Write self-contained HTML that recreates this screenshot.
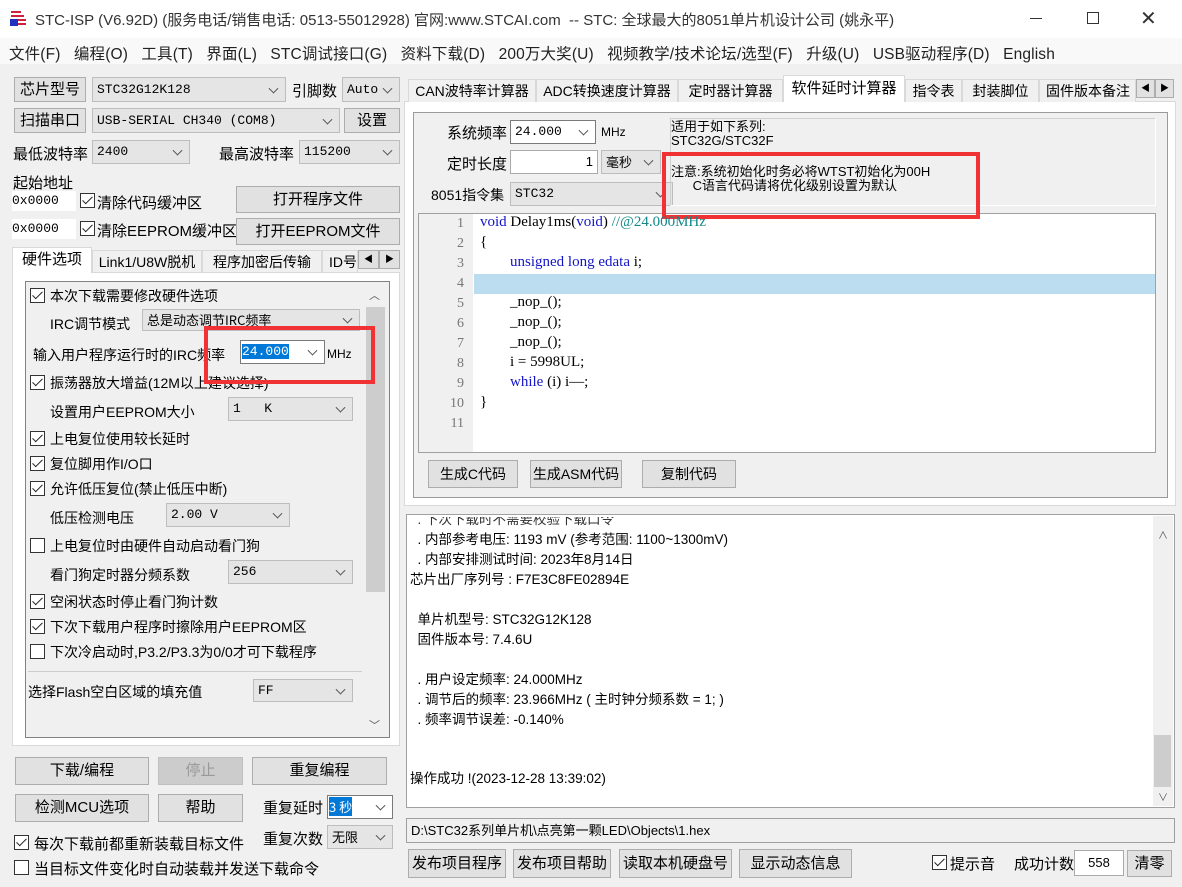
<!DOCTYPE html>
<html><head><meta charset="utf-8"><style>
*{box-sizing:border-box;margin:0;padding:0}
body{width:1182px;height:887px;background:#f0f0f0;font-family:"Liberation Sans","Noto Sans CJK SC",sans-serif;font-size:14px;color:#000;position:relative;overflow:hidden}
.a{position:absolute;white-space:nowrap}
.btn{position:absolute;background:#e1e1e1;border:1px solid #adadad;text-align:center;font-size:14px}
.cb{position:absolute;background:#e5e5e5;border:1px solid #bdbdbd;padding-left:4px;font-family:"Liberation Mono","Noto Sans CJK SC",monospace;font-size:13px}
.cw{background:#fff;border:1px solid #7a7a7a}
.cb:after{content:"";position:absolute;right:8px;top:50%;width:6px;height:6px;border-right:1px solid #555;border-bottom:1px solid #555;transform:translateY(-70%) rotate(45deg)}
.ck{position:absolute;width:15px;height:15px;border:1px solid #333;background:#fff}
.ck.on:after{content:"";position:absolute;left:4px;top:0px;width:4px;height:9px;border-right:1.5px solid #222;border-bottom:1.5px solid #222;transform:rotate(45deg)}
.tab{position:absolute;background:#f0f0f0;border:1px solid #d9d9d9;border-bottom:none;text-align:center;font-size:14px}
.tab.act{background:#fff}
.red{position:absolute;border:4px solid #f03235}
.ln{position:absolute;left:430px;width:34px;text-align:right;color:#777;font-size:14px;font-family:"Liberation Serif",serif}
.code{position:absolute;left:480px;font-family:"Liberation Serif","Noto Serif CJK SC",serif;font-size:15px}
.kw{color:#1414c8}
.o{position:absolute;left:410px;font-size:13.5px}
</style></head><body>
<div class="a" style="left:0;top:0;width:1182px;height:38px;background:#fff"></div>
<svg class="a" style="left:9px;top:8px" width="20" height="20"><path d="M2 4h10M2 8h13M2 12h15M2 16h15" stroke="#d02040" stroke-width="2"/><path d="M1 11h8v7H1z" fill="#2030c0"/></svg>
<div class="a" style="left:35px;top:9px;font-size:15px;color:#333">STC-ISP (V6.92D) (服务电话/销售电话: 0513-55012928) 官网:www.STCAI.com &nbsp;-- STC: 全球最大的8051单片机设计公司 (姚永平)</div>
<div class="a" style="left:1030px;top:18px;width:12px;height:1px;background:#333"></div>
<div class="a" style="left:1087px;top:12px;width:12px;height:12px;border:1px solid #333"></div>
<div class="a" style="left:1140px;top:6px;font-size:20px;color:#333">✕</div>
<div class="a" style="left:0;top:38px;width:1182px;height:26px;background:#f9f9f9"></div>
<div class="a" style="left:9px;top:42px;font-size:15.5px;color:#222;letter-spacing:0.15px">文件(F) &nbsp; 编程(O) &nbsp; 工具(T) &nbsp; 界面(L) &nbsp; STC调试接口(G) &nbsp; 资料下载(D) &nbsp; 200万大奖(U) &nbsp; 视频教学/技术论坛/选型(F) &nbsp; 升级(U) &nbsp; USB驱动程序(D) &nbsp; English</div>

<div class="btn" style="left:14px;top:77px;width:72px;height:25px;line-height:23px;font-size:15px">芯片型号</div>
<div class="cb" style="left:92px;top:77px;width:194px;height:25px;line-height:23px">STC32G12K128</div>
<div class="a" style="left:292px;top:80px;font-size:15px">引脚数</div>
<div class="cb" style="left:342px;top:77px;width:58px;height:25px;line-height:23px">Auto</div>
<div class="btn" style="left:14px;top:108px;width:72px;height:25px;line-height:23px;font-size:15px">扫描串口</div>
<div class="cb" style="left:92px;top:108px;width:248px;height:25px;line-height:23px">USB-SERIAL CH340 (COM8)</div>
<div class="btn" style="left:344px;top:108px;width:56px;height:25px;line-height:23px;font-size:15px">设置</div>
<div class="a" style="left:13px;top:143px;font-size:15px">最低波特率</div>
<div class="cb" style="left:92px;top:140px;width:98px;height:24px;line-height:22px">2400</div>
<div class="a" style="left:219px;top:143px;font-size:15px">最高波特率</div>
<div class="cb" style="left:299px;top:140px;width:101px;height:24px;line-height:22px">115200</div>
<div class="a" style="left:13px;top:172px;font-size:15px">起始地址</div>
<div class="a" style="left:12px;top:191px;width:64px;height:20px;background:#fff;font-family:'Liberation Mono';font-size:13px;line-height:20px">0x0000</div>
<div class="ck on" style="left:80px;top:193px"></div><div class="a" style="left:97px;top:192px;font-size:15px">清除代码缓冲区</div>
<div class="btn" style="left:236px;top:186px;width:164px;height:27px;line-height:25px;font-size:15px">打开程序文件</div>
<div class="a" style="left:12px;top:219px;width:64px;height:20px;background:#fff;font-family:'Liberation Mono';font-size:13px;line-height:20px">0x0000</div>
<div class="ck on" style="left:80px;top:221px"></div><div class="a" style="left:97px;top:220px;font-size:15px">清除EEPROM缓冲区</div>
<div class="btn" style="left:236px;top:218px;width:164px;height:27px;line-height:25px;font-size:15px">打开EEPROM文件</div>
<div class="a" style="left:12px;top:272px;width:388px;height:474px;background:#fff;border:1px solid #d9d9d9"></div>
<div class="tab act" style="left:12px;top:247px;width:80px;height:26px;line-height:24px;font-size:15px">硬件选项</div>
<div class="tab" style="left:92px;top:250px;width:110px;height:22px;line-height:22px">Link1/U8W脱机</div>
<div class="tab" style="left:202px;top:250px;width:120px;height:22px;line-height:22px">程序加密后传输</div>
<div class="tab" style="left:322px;top:250px;width:36px;height:22px;line-height:22px;text-align:left;padding-left:6px">ID号</div>
<div class="btn" style="left:358px;top:250px;width:21px;height:19px;font-size:9px;line-height:17px">◀</div>
<div class="btn" style="left:379px;top:250px;width:21px;height:19px;font-size:9px;line-height:17px">▶</div>
<div class="a" style="left:25px;top:281px;width:365px;height:457px;border:1px solid #828282;background:#f0f0f0"></div>
<div class="a" style="left:365px;top:283px;width:22px;height:453px;background:#f0f0f0"></div>
<div class="a" style="left:366px;top:307px;width:19px;height:285px;background:#cdcdcd"></div>
<div class="a" style="left:369px;top:287px;font-size:11px;color:#555">︿</div>
<div class="a" style="left:369px;top:717px;font-size:11px;color:#555">﹀</div>
<div class="ck on" style="left:30px;top:288px"></div><div class="a" style="left:50px;top:286px">本次下载需要修改硬件选项</div>
<div class="a" style="left:50px;top:314px">IRC调节模式</div>
<div class="cb" style="left:142px;top:309px;width:218px;height:22px;line-height:20px;font-family:'Noto Sans CJK SC'">总是动态调节IRC频率</div>
<div class="a" style="left:33px;top:345px">输入用户程序运行时的IRC频率</div>
<div class="cb cw" style="left:240px;top:340px;width:85px;height:24px;line-height:22px;padding-left:1px"><span style="background:#0078d7;color:#fff">24.000</span></div>
<div class="a" style="left:327px;top:347px;font-size:12px">MHz</div>
<div class="ck on" style="left:30px;top:375px"></div><div class="a" style="left:50px;top:373px">振荡器放大增益(12M以上建议选择)</div>
<div class="red" style="left:204px;top:326px;width:171px;height:58px"></div>
<div class="a" style="left:50px;top:402px">设置用户EEPROM大小</div>
<div class="cb" style="left:228px;top:397px;width:125px;height:24px;line-height:22px">1 &nbsp; K</div>
<div class="ck on" style="left:30px;top:431px"></div><div class="a" style="left:50px;top:429px">上电复位使用较长延时</div>
<div class="ck on" style="left:30px;top:456px"></div><div class="a" style="left:50px;top:454px">复位脚用作I/O口</div>
<div class="ck on" style="left:30px;top:481px"></div><div class="a" style="left:50px;top:479px">允许低压复位(禁止低压中断)</div>
<div class="a" style="left:50px;top:508px">低压检测电压</div>
<div class="cb" style="left:166px;top:503px;width:124px;height:24px;line-height:22px">2.00 V</div>
<div class="ck" style="left:30px;top:538px"></div><div class="a" style="left:50px;top:536px">上电复位时由硬件自动启动看门狗</div>
<div class="a" style="left:50px;top:565px">看门狗定时器分频系数</div>
<div class="cb" style="left:228px;top:560px;width:125px;height:24px;line-height:22px">256</div>
<div class="ck on" style="left:30px;top:594px"></div><div class="a" style="left:50px;top:592px">空闲状态时停止看门狗计数</div>
<div class="ck on" style="left:30px;top:619px"></div><div class="a" style="left:50px;top:617px">下次下载用户程序时擦除用户EEPROM区</div>
<div class="ck" style="left:30px;top:644px"></div><div class="a" style="left:50px;top:642px">下次冷启动时,P3.2/P3.3为0/0才可下载程序</div>
<div class="a" style="left:28px;top:671px;width:334px;height:1px;background:#ccc"></div>
<div class="a" style="left:28px;top:682px">选择Flash空白区域的填充值</div>
<div class="cb" style="left:253px;top:679px;width:100px;height:23px;line-height:21px">FF</div>
<div class="btn" style="left:15px;top:757px;width:134px;height:28px;line-height:26px;font-size:15px">下载/编程</div>
<div class="btn" style="left:158px;top:757px;width:85px;height:28px;line-height:26px;font-size:15px;color:#999;background:#ccc;border-color:#bfbfbf">停止</div>
<div class="btn" style="left:252px;top:757px;width:135px;height:28px;line-height:26px;font-size:15px">重复编程</div>
<div class="btn" style="left:15px;top:794px;width:134px;height:28px;line-height:26px;font-size:15px">检测MCU选项</div>
<div class="btn" style="left:158px;top:794px;width:85px;height:28px;line-height:26px;font-size:15px">帮助</div>
<div class="a" style="left:263px;top:797px;font-size:15px">重复延时</div>
<div class="cb cw" style="left:327px;top:795px;width:66px;height:24px;line-height:22px;padding-left:1px;font-family:'Noto Sans CJK SC'"><span style="background:#0078d7;color:#fff">3 秒</span></div>
<div class="a" style="left:263px;top:828px;font-size:15px">重复次数</div>
<div class="cb" style="left:327px;top:825px;width:66px;height:24px;line-height:22px;font-family:'Noto Sans CJK SC'">无限</div>
<div class="ck on" style="left:14px;top:835px"></div><div class="a" style="left:34px;top:833px;font-size:15px">每次下载前都重新装载目标文件</div>
<div class="ck" style="left:14px;top:860px"></div><div class="a" style="left:34px;top:858px;font-size:15px">当目标文件变化时自动装载并发送下载命令</div>

<div class="a" style="left:404px;top:101px;width:772px;height:405px;background:#fff;border:1px solid #d9d9d9"></div>
<div class="tab" style="left:408px;top:79px;width:128px;height:23px;line-height:23px">CAN波特率计算器</div>
<div class="tab" style="left:536px;top:79px;width:142px;height:23px;line-height:23px">ADC转换速度计算器</div>
<div class="tab" style="left:678px;top:79px;width:105px;height:23px;line-height:23px">定时器计算器</div>
<div class="tab act" style="left:783px;top:75px;width:122px;height:27px;line-height:26px;font-size:15px">软件延时计算器</div>
<div class="tab" style="left:905px;top:79px;width:57px;height:23px;line-height:23px">指令表</div>
<div class="tab" style="left:962px;top:79px;width:77px;height:23px;line-height:23px">封装脚位</div>
<div class="tab" style="left:1039px;top:79px;width:97px;height:23px;line-height:23px;text-align:left;padding-left:6px;overflow:hidden">固件版本备注</div>
<div class="btn" style="left:1136px;top:79px;width:19px;height:19px;font-size:9px;line-height:17px">◀</div>
<div class="btn" style="left:1155px;top:79px;width:19px;height:19px;font-size:9px;line-height:17px">▶</div>
<div class="a" style="left:413px;top:112px;width:755px;height:386px;border:1px solid #9a9a9a;background:#f0f0f0"></div>
<div class="a" style="left:447px;top:122px;font-size:15px">系统频率</div>
<div class="cb cw" style="left:510px;top:120px;width:86px;height:24px;line-height:22px">24.000</div>
<div class="a" style="left:601px;top:125px;font-size:12px">MHz</div>
<div class="a" style="left:447px;top:153px;font-size:15px">定时长度</div>
<div class="a" style="left:510px;top:150px;width:88px;height:24px;background:#fff;border:1px solid #aaa;text-align:right;padding-right:4px;font-size:13px;line-height:22px">1</div>
<div class="cb" style="left:601px;top:150px;width:60px;height:24px;line-height:22px;font-family:'Noto Sans CJK SC'">毫秒</div>
<div class="a" style="left:431px;top:185px;font-size:14px">8051指令集</div>
<div class="cb" style="left:510px;top:182px;width:163px;height:24px;line-height:22px">STC32</div>
<div class="a" style="left:670px;top:118px;width:486px;height:88px;border:1px solid #d0d0d0;border-right-color:#fff;border-bottom-color:#fff"></div>
<div class="a" style="left:671px;top:120px;font-size:13px;line-height:14px">适用于如下系列:<br>STC32G/STC32F</div>
<div class="a" style="left:671px;top:165px;font-size:13px;line-height:14px">注意:系统初始化时务必将WTST初始化为00H<br>&nbsp; &nbsp; &nbsp; C语言代码请将优化级别设置为默认</div>
<div class="a" style="left:418px;top:213px;width:738px;height:240px;background:#fff;border:1px solid #a0a0a0"></div>
<div class="a" style="left:419px;top:214px;width:54px;height:238px;background:#f0f0f0"></div>
<div class="a" style="left:474px;top:274px;width:681px;height:20px;background:#bcdcf0"></div>
<div class="red" style="left:662px;top:152px;width:318px;height:67px"></div>
<div class="ln" style="top:216px">1</div><div class="ln" style="top:236px">2</div><div class="ln" style="top:256px">3</div><div class="ln" style="top:276px">4</div><div class="ln" style="top:296px">5</div><div class="ln" style="top:316px">6</div><div class="ln" style="top:336px">7</div><div class="ln" style="top:356px">8</div><div class="ln" style="top:376px">9</div><div class="ln" style="top:396px">10</div><div class="ln" style="top:416px">11</div>
<div class="code" style="top:214px"><span class="kw">void</span> Delay1ms(<span class="kw">void</span>) <span style="color:#168888">//@24.000MHz</span></div>
<div class="code" style="top:234px">{</div>
<div class="code" style="top:254px;left:510px"><span class="kw">unsigned long edata</span> i;</div>
<div class="code" style="top:294px;left:510px">_nop_();</div>
<div class="code" style="top:314px;left:510px">_nop_();</div>
<div class="code" style="top:334px;left:510px">_nop_();</div>
<div class="code" style="top:354px;left:510px">i = 5998UL;</div>
<div class="code" style="top:374px;left:510px"><span class="kw">while</span> (i) i—;</div>
<div class="code" style="top:394px">}</div>
<div class="btn" style="left:428px;top:460px;width:90px;height:28px;line-height:26px">生成C代码</div>
<div class="btn" style="left:530px;top:460px;width:92px;height:28px;line-height:26px">生成ASM代码</div>
<div class="btn" style="left:642px;top:460px;width:94px;height:28px;line-height:26px">复制代码</div>
<div class="a" style="left:406px;top:514px;width:769px;height:294px;background:#fff;border:1px solid #a0a0a0;overflow:hidden"></div>
<div class="a" style="left:1153px;top:516px;width:20px;height:290px;background:#f0f0f0"></div>
<div class="a" style="left:1154px;top:735px;width:17px;height:52px;background:#cdcdcd"></div>
<div class="a" style="left:1158px;top:527px;font-size:10px;color:#555">∧</div>
<div class="a" style="left:1158px;top:789px;font-size:10px;color:#555">∨</div>
<div class="o" style="top:508px;color:#333;clip-path:inset(9px 0 0 0)">&nbsp; . 下次下载时不需要校验下载口令</div>
<div class="o" style="top:528px">&nbsp; . 内部参考电压: 1193 mV (参考范围: 1100~1300mV)</div>
<div class="o" style="top:548px">&nbsp; . 内部安排测试时间: 2023年8月14日</div>
<div class="o" style="top:568px">芯片出厂序列号 : F7E3C8FE02894E</div>
<div class="o" style="top:608px">&nbsp; 单片机型号: STC32G12K128</div>
<div class="o" style="top:628px">&nbsp; 固件版本号: 7.4.6U</div>
<div class="o" style="top:668px">&nbsp; . 用户设定频率: 24.000MHz</div>
<div class="o" style="top:688px">&nbsp; . 调节后的频率: 23.966MHz ( 主时钟分频系数 = 1; )</div>
<div class="o" style="top:708px">&nbsp; . 频率调节误差: -0.140%</div>
<div class="o" style="top:767px">操作成功 !(2023-12-28 13:39:02)</div>
<div class="a" style="left:406px;top:818px;width:769px;height:25px;background:#f0f0f0;border:1px solid #a0a0a0;padding-left:4px;line-height:23px;font-size:13px">D:\STC32系列单片机\点亮第一颗LED\Objects\1.hex</div>
<div class="btn" style="left:408px;top:849px;width:98px;height:29px;line-height:27px;font-size:15px">发布项目程序</div>
<div class="btn" style="left:513px;top:849px;width:98px;height:29px;line-height:27px;font-size:15px">发布项目帮助</div>
<div class="btn" style="left:619px;top:849px;width:113px;height:29px;line-height:27px;font-size:15px">读取本机硬盘号</div>
<div class="btn" style="left:739px;top:849px;width:113px;height:29px;line-height:27px;font-size:15px">显示动态信息</div>
<div class="ck on" style="left:932px;top:855px"></div><div class="a" style="left:950px;top:853px;font-size:15px">提示音</div>
<div class="a" style="left:1014px;top:853px;font-size:15px">成功计数</div>
<div class="a" style="left:1074px;top:850px;width:50px;height:26px;background:#fff;border:1px solid #aaa;text-align:center;line-height:24px;font-size:13px">558</div>
<div class="btn" style="left:1127px;top:850px;width:45px;height:27px;line-height:25px;font-size:15px">清零</div>
</body></html>
